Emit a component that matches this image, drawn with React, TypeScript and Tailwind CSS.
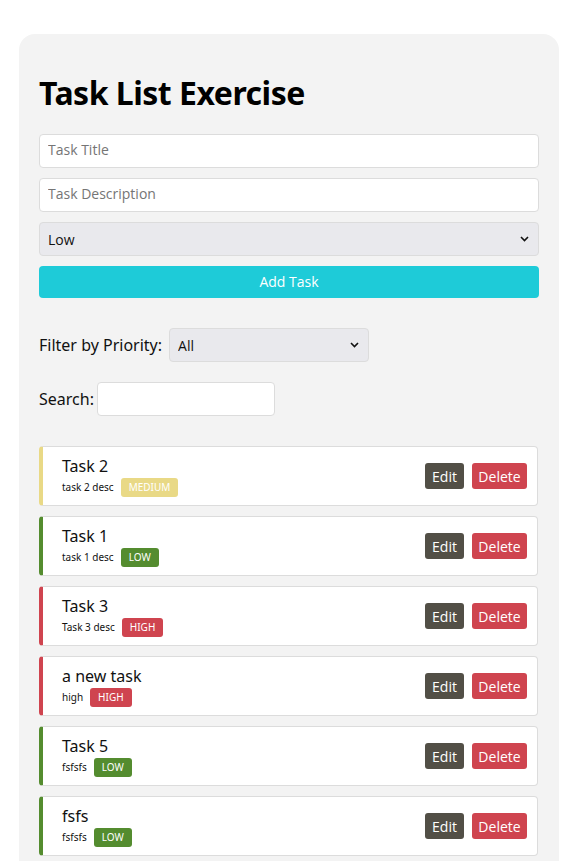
import React from 'react';

type Priority = 'low' | 'medium' | 'high';

interface Task {
  id: number;
  title: string;
  description: string;
  priority: Priority;
}

const TASKS: Task[] = [
  { id: 2, title: 'Task 2', description: 'task 2 desc', priority: 'medium' },
  { id: 1, title: 'Task 1', description: 'task 1 desc', priority: 'low' },
  { id: 3, title: 'Task 3', description: 'Task 3 desc', priority: 'high' },
  { id: 4, title: 'a new task', description: 'high', priority: 'high' },
  { id: 5, title: 'Task 5', description: 'fsfsfs', priority: 'low' },
  { id: 6, title: 'fsfs', description: 'fsfsfs', priority: 'low' },
];

const BORDER: Record<Priority, string> = {
  low: 'border-l-[#548c2f]',
  medium: 'border-l-[#e9d986]',
  high: 'border-l-[#cf444f]',
};

const BADGE: Record<Priority, string> = {
  low: 'bg-[#548c2f]',
  medium: 'bg-[#e9d986]',
  high: 'bg-[#cf444f]',
};

const sans = "font-['Noto_Sans','Open_Sans',sans-serif]";
const ui = "font-['Open_Sans','Noto_Sans',sans-serif]";

function Chevron() {
  return (
    <svg className="absolute right-[10px] top-1/2 -translate-y-1/2 w-[9px] h-[6px] pointer-events-none" viewBox="0 0 9 6" fill="none">
      <path d="M1 1l3.5 3.5L8 1" stroke="#111" strokeWidth={1.6} />
    </svg>
  );
}

function TaskItem({ task }: { task: Task }) {
  return (
    <div className={`flex items-center h-[60px] bg-white border border-[#dcdcdc] border-l-4 rounded-[4px] pl-[19px] pr-[10px] mr-[1px] ${BORDER[task.priority]}`}>
      <div className="flex-1 min-w-0">
        <div className={`${sans} text-[16px] leading-[20px] text-[#111]`}>{task.title}</div>
        <div className="flex items-center gap-[7px] mt-[2px]">
          <span className={`${sans} text-[10px] text-[#111]`}>{task.description}</span>
          <span className={`${sans} text-[10px] leading-[19px] text-white rounded-[3px] px-[8px] ${BADGE[task.priority]}`}>
            {task.priority.toUpperCase()}
          </span>
        </div>
      </div>
      <div className={`${ui} flex items-center gap-[8px] text-[14px] text-white`}>
        <button className="h-[26px] w-[39px] rounded-[3px] bg-[#524f46]">Edit</button>
        <button className="h-[26px] w-[55px] rounded-[3px] bg-[#cf444f]">Delete</button>
      </div>
    </div>
  );
}

export default function App() {
  return (
    <div className="min-h-screen bg-white pt-[34px]">
      <div className="ml-[19px] w-[540px] bg-[#f3f3f3] rounded-t-[16px] px-[20px] pt-[40px] pb-[20px]">
        <h1 className={`${sans} text-[32px] leading-[38px] font-bold text-black tracking-[-0.5px]`}>Task List Exercise</h1>

        <div className="mt-[22px] flex flex-col">
          <input
            placeholder="Task Title"
            className={`${ui} h-[34px] bg-white border border-[#dcdcdc] rounded-[4px] px-[8px] pb-[3px] text-[14px] placeholder:text-[#757575] outline-none`}
          />
          <input
            placeholder="Task Description"
            className={`${ui} mt-[10px] h-[34px] bg-white border border-[#dcdcdc] rounded-[4px] px-[8px] pb-[3px] text-[14px] placeholder:text-[#757575] outline-none`}
          />
          <div className="relative mt-[10px]">
            <select className={`${ui} appearance-none w-full h-[34px] bg-[#e9e9ed] border border-[#dcdcdc] rounded-[4px] px-[8px] text-[14px] text-[#111] outline-none`}>
              <option>Low</option>
              <option>Medium</option>
              <option>High</option>
            </select>
            <Chevron />
          </div>
          <button className={`${ui} mt-[10px] h-[32px] pb-[2px] rounded-[4px] bg-[#1ecbd8] text-white text-[14px]`}>Add Task</button>
        </div>

        <div className="mt-[30px] flex items-center gap-[7px]">
          <span className={`${sans} text-[16px] text-[#111]`}>Filter by Priority:</span>
          <div className="relative">
            <select className={`${ui} appearance-none w-[200px] h-[34px] bg-[#e9e9ed] border border-[#dcdcdc] rounded-[4px] px-[8px] text-[14px] text-[#111] outline-none`}>
              <option>All</option>
              <option>Low</option>
              <option>Medium</option>
              <option>High</option>
            </select>
            <Chevron />
          </div>
        </div>

        <div className="mt-[20px] flex items-center gap-[3px]">
          <span className={`${sans} text-[16px] text-[#111]`}>Search:</span>
          <input className={`${ui} w-[178px] h-[34px] bg-white border border-[#dcdcdc] rounded-[4px] px-[8px] text-[14px] outline-none`} />
        </div>

        <div className="mt-[30px] flex flex-col gap-[10px]">
          {TASKS.map(t => <TaskItem key={t.id} task={t} />)}
        </div>
      </div>
    </div>
  );
}
